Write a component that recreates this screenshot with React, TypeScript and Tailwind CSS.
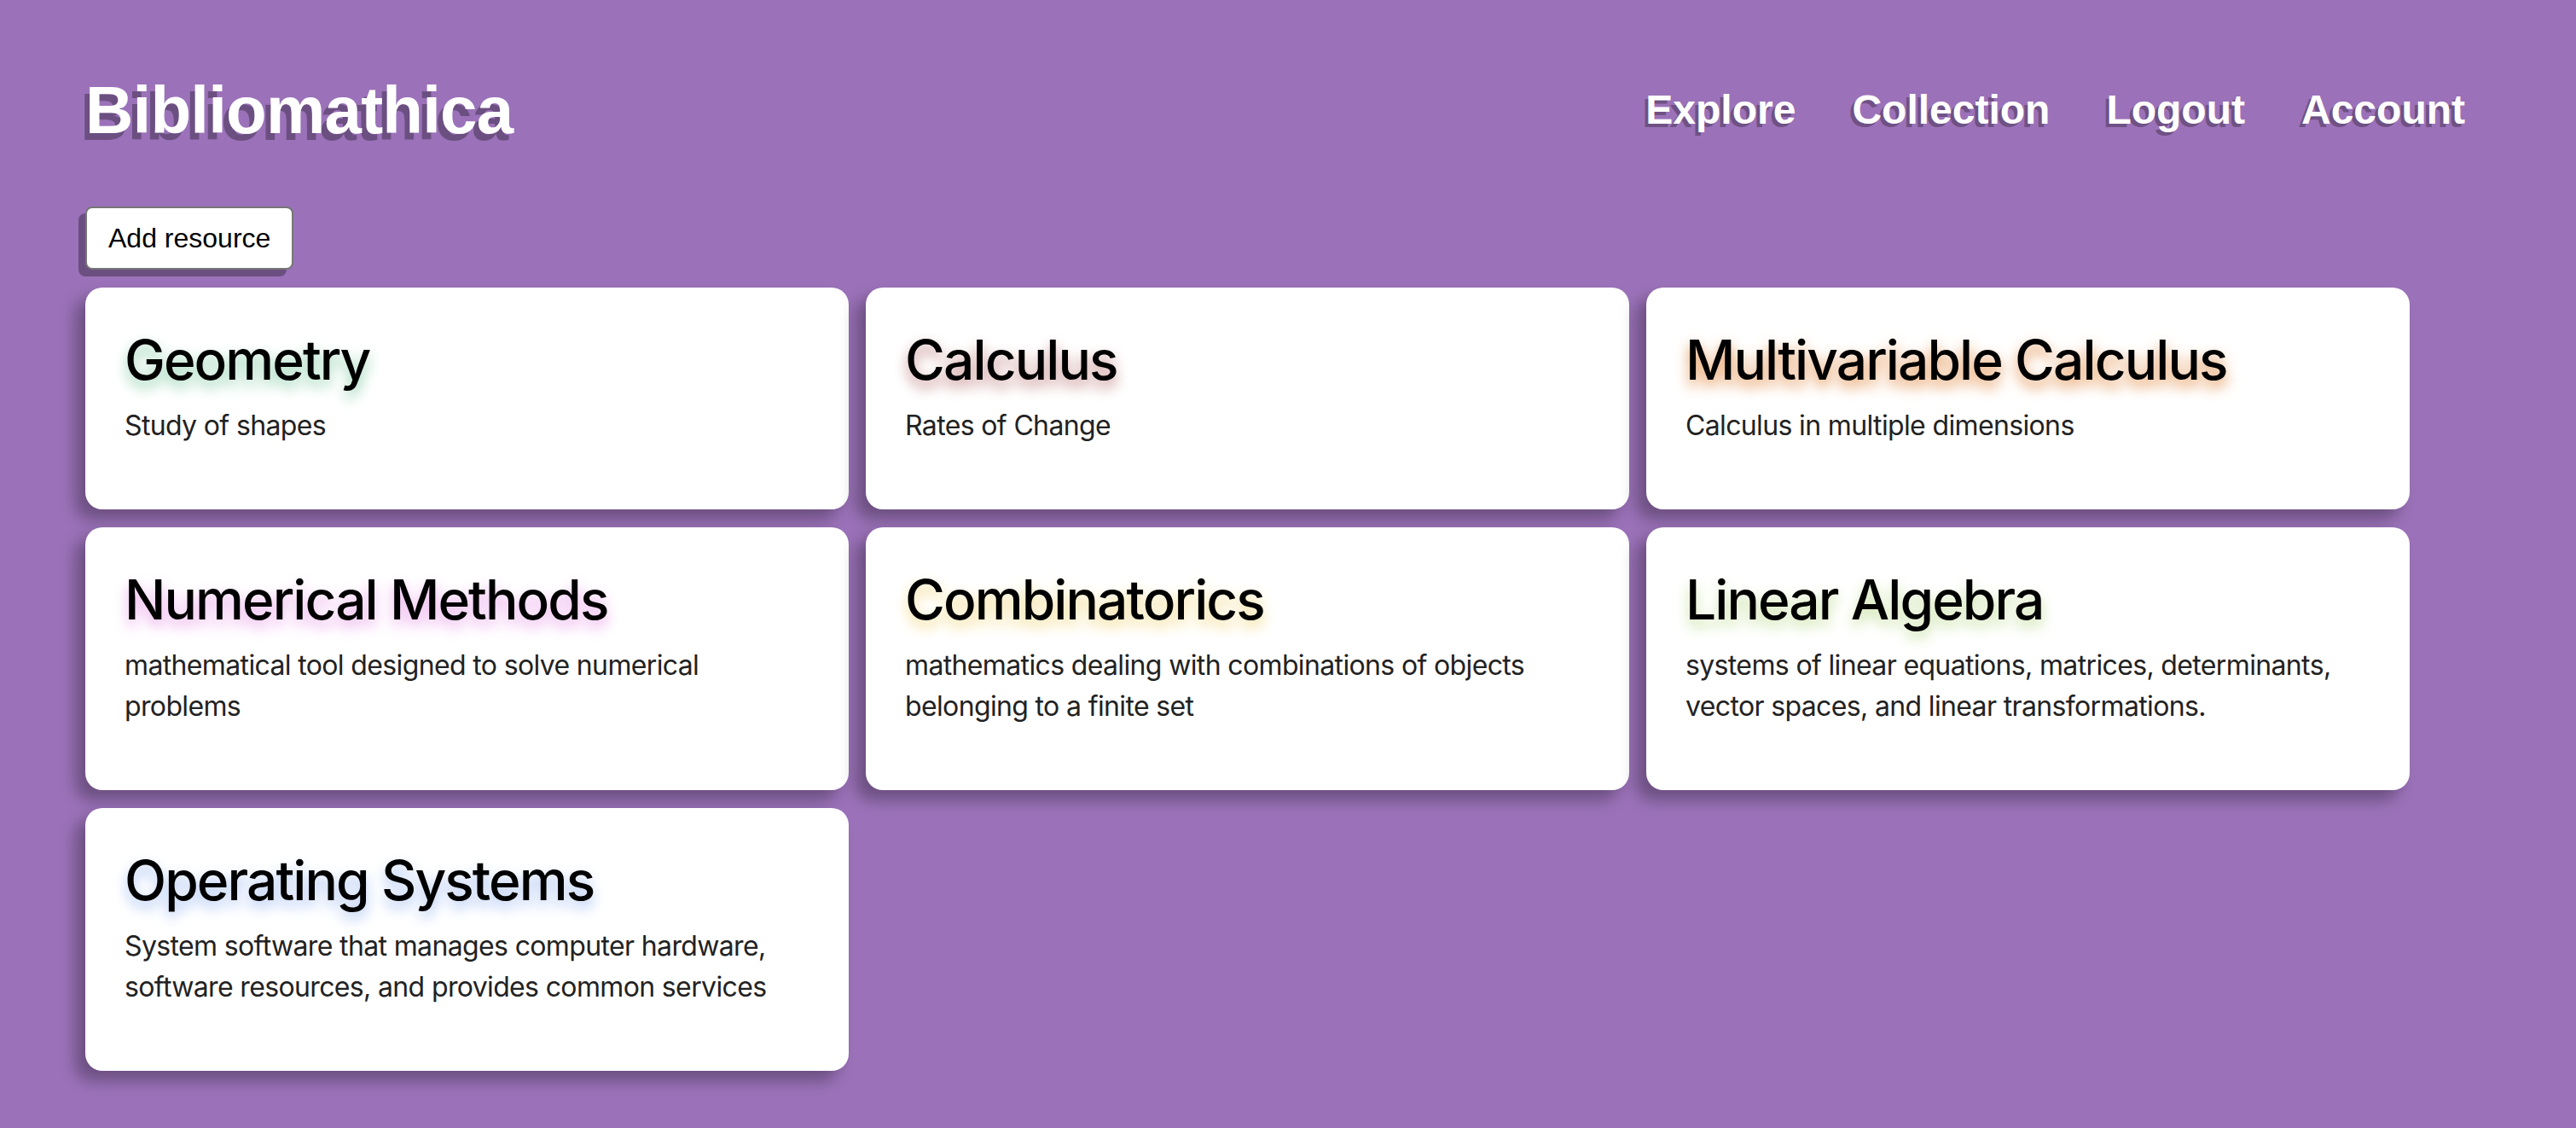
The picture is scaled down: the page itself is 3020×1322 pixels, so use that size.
import React from "react";

interface Resource {
  title: string;
  description: string;
  glow: string;
}

const resources: Resource[] = [
  {
    title: "Geometry",
    description: "Study of shapes",
    glow: "[text-shadow:0_8px_16px_#8fcfae]",
  },
  {
    title: "Calculus",
    description: "Rates of Change",
    glow: "[text-shadow:0_8px_16px_#c48a8a]",
  },
  {
    title: "Multivariable Calculus",
    description: "Calculus in multiple dimensions",
    glow: "[text-shadow:0_8px_16px_#e39250]",
  },
  {
    title: "Numerical Methods",
    description: "mathematical tool designed to solve numerical problems",
    glow: "[text-shadow:0_8px_16px_#eaa6ea]",
  },
  {
    title: "Combinatorics",
    description:
      "mathematics dealing with combinations of objects belonging to a finite set",
    glow: "[text-shadow:0_8px_16px_#f2d98a]",
  },
  {
    title: "Linear Algebra",
    description:
      "systems of linear equations, matrices, determinants, vector spaces, and linear transformations.",
    glow: "[text-shadow:0_8px_16px_#c6df9f]",
  },
  {
    title: "Operating Systems",
    description:
      "System software that manages computer hardware, software resources, and provides common services",
    glow: "[text-shadow:0_8px_16px_#a8c1f2]",
  },
];

const navLinks = ["Explore", "Collection", "Logout", "Account"];

const ResourceCard: React.FC<{ resource: Resource }> = ({ resource }) => {
  return (
    <div className="bg-white rounded-[20px] shadow-[-12px_12px_18px_rgba(0,0,0,0.3)] px-[46px] pt-[46px] pb-[74px]">
      <h2
        className={`text-[64px] leading-[77px] font-medium text-black tracking-[-0.03em] ${resource.glow}`}
      >
        {resource.title}
      </h2>
      <p className="mt-[15px] text-[32px] leading-[48px] text-[#222222] tracking-[-0.02em]">
        {resource.description}
      </p>
    </div>
  );
};

export default function App() {
  return (
    <div className="min-h-screen bg-[#9b72b9] px-[100px] pt-[84px] pb-[60px] font-['Inter',sans-serif]">
      <header className="flex items-center justify-between pr-[30px]">
        <h1 className="font-['Liberation_Sans',Arial,sans-serif] font-bold text-[78px] leading-[90px] tracking-[-0.01em] text-white [text-shadow:-6px_8px_0_rgba(0,0,0,0.3)]">
          Bibliomathica
        </h1>
        <nav className="flex items-center gap-[66px] font-['Liberation_Sans',Arial,sans-serif] font-bold text-[48px] leading-[56px] text-white">
          {navLinks.map((link) => (
            <a
              key={link}
              href="#"
              className="[text-shadow:-4px_4px_0_rgba(0,0,0,0.3)]"
            >
              {link}
            </a>
          ))}
        </nav>
      </header>

      <button className="mt-[68px] bg-white border-2 border-[#767676] rounded-[8px] px-[25px] py-[17px] text-[32px] leading-[36px] text-black font-['Liberation_Sans',Arial,sans-serif] shadow-[-8px_8px_0_rgba(0,0,0,0.3)]">
        Add resource
      </button>

      <div className="mt-[21px] grid grid-cols-[repeat(3,895px)] gap-x-[20px] gap-y-[21px]">
        {resources.map((r) => (
          <ResourceCard key={r.title} resource={r} />
        ))}
      </div>
    </div>
  );
}
